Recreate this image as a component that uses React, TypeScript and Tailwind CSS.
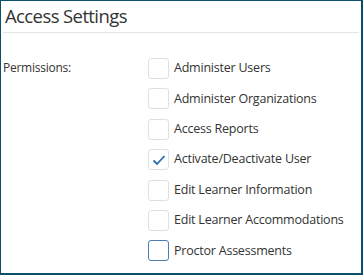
import React from "react";

const items = [
  { label: "Administer Users", checked: false },
  { label: "Administer Organizations", checked: false },
  { label: "Access Reports", checked: false },
  { label: "Activate/Deactivate User", checked: true },
  { label: "Edit Learner Information", checked: false },
  { label: "Edit Learner Accommodations", checked: false },
  { label: "Proctor Assessments", checked: false, focus: true },
];

export default function App() {
  return (
    <div
      className="w-[363px] h-[275px] bg-white border-t border-l border-r-2 border-b-2 border-[#0b4f6c] overflow-hidden text-[#333]"
      style={{ fontFamily: '"Open Sans", "Noto Sans", sans-serif' }}
    >
      <div className="mx-[2px] h-[32px] border-b border-[#e5e5e5] pl-[2px] flex items-center">
        <span className="text-[18.5px] tracking-[-0.6px] leading-none text-[#333] -mt-[1px]">Access Settings</span>
      </div>
      <div className="flex pt-[25px] pl-[2px]">
        <div className="w-[145px] text-[12px] tracking-[-0.25px] leading-[20px]">Permissions:</div>
        <div className="flex flex-col gap-[9.4px]">
          {items.map((it) => (
            <div key={it.label} className="flex items-center h-[21px]">
              <div
                className={
                  it.focus
                    ? "w-[21px] h-[21px] rounded-[3px] border border-[#4a7db3] flex items-center justify-center"
                    : "w-[21px] h-[21px] rounded-[3px] border border-[#e0e0e0] flex items-center justify-center"
                }
              >
                {it.checked && (
                  <svg width="14" height="12" viewBox="0 0 14 12">
                    <path d="M1.5 6.5 L5 10 L12.5 2" fill="none" stroke="#2b6cb0" strokeWidth="1.8" />
                  </svg>
                )}
              </div>
              <span className="ml-[5px] text-[12.5px] tracking-[-0.22px] leading-none text-[#333]">{it.label}</span>
            </div>
          ))}
        </div>
      </div>
    </div>
  );
}
